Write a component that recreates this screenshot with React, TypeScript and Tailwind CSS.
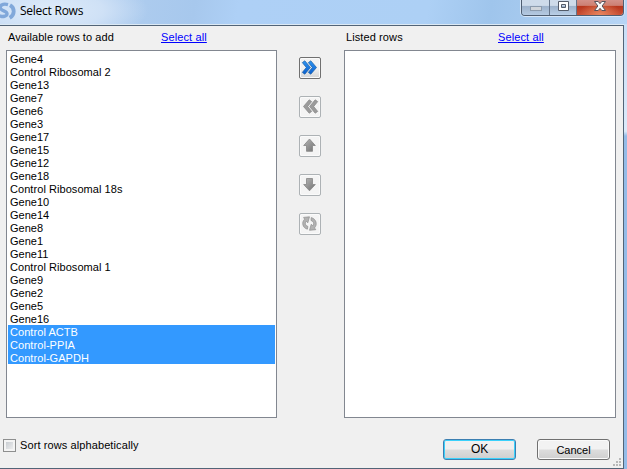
import type { ReactNode } from "react";

const rows = [
  "Gene4", "Control Ribosomal 2", "Gene13", "Gene7", "Gene6", "Gene3", "Gene17", "Gene15",
  "Gene12", "Gene18", "Control Ribosomal 18s", "Gene10", "Gene14", "Gene8", "Gene1", "Gene11",
  "Control Ribosomal 1", "Gene9", "Gene2", "Gene5", "Gene16", "Control ACTB", "Control-PPIA",
  "Control-GAPDH",
];
const selected = new Set(["Control ACTB", "Control-PPIA", "Control-GAPDH"]);

function ToolButton({ label, active, children }: { label: string; active?: boolean; children: ReactNode }) {
  return (
    <button
      aria-label={label}
      className={`flex h-[22px] w-[22px] items-center justify-center rounded-[2px] border shadow-[inset_0_0_0_1px_#fafafa] ${
        active ? "border-[#707070] bg-linear-to-b from-[#f2f2f2] from-50% to-[#d5d5d5]" : "border-[#adb2b5] bg-[#f4f4f4]"
      }`}
    >
      {children}
    </button>
  );
}

function Chevrons({ left }: { left?: boolean }) {
  return (
    <svg width="20" height="20" viewBox="0 0 20 20" className={left ? "-scale-x-100" : ""}>
      <defs>
        <linearGradient id="blue" x2="0" y2="1">
          <stop stopColor="#2f95f2" />
          <stop offset="1" stopColor="#0a5fd0" />
        </linearGradient>
      </defs>
      <g fill={left ? "#9b9b9b" : "url(#blue)"} stroke={left ? "#858585" : "#1f609f"} strokeWidth=".7" strokeLinejoin="round">
        <path d="M2.3 4.6 4.8 2.8l5.7 6.7-5.7 6.7-2.5-1.8 4-4.9Z" />
        <path d="M8.3 4.6l2.5-1.8 5.7 6.7-5.7 6.7-2.5-1.8 4-4.9Z" />
      </g>
    </svg>
  );
}

function Arrow({ down }: { down?: boolean }) {
  return (
    <svg width="20" height="20" viewBox="0 0 20 20">
      <defs>
        <linearGradient id="grey" x2="1" y2="1">
          <stop stopColor="#b8b8b8" />
          <stop offset="1" stopColor="#707070" />
        </linearGradient>
      </defs>
      <path
        d={down ? "M6.5 3.5h6v6h2.8l-5.8 6.3-5.8-6.3h2.8Z" : "m9.5 3 5.8 6.5h-2.8v5.8h-6V9.5H3.7Z"}
        fill="url(#grey)" stroke="#858585" strokeWidth=".8"
      />
    </svg>
  );
}

function Refresh() {
  return (
    <svg width="20" height="20" viewBox="0 0 20 20" fill="#b2b2b2" stroke="#8e8e8e" strokeWidth=".7" strokeLinejoin="round">
      <path d="M7.4 15.2C2.6 14 1.2 8.3 4.6 5.2L3.6 3.4l5.9-.6-1.7 6-1.5-1.5C4.600 9.300 5.200 11.400 7.900 12.400Z" />
      <path d="M11.200 3.600c5 1.200 6.600 7 3.300 10.300l1.300 1.800-6.300.6 1.700-6 1.600 1.400c1.600-2 .9-4.200-1.800-5.200Z" />
    </svg>
  );
}

function TitleBar() {
  return (
    <header className="flex h-6 shrink-0 items-start justify-between bg-[radial-gradient(ellipse_100px_35px_at_48px_10px,#deebfa_0%,#cfe1f6_55%,transparent_100%),linear-gradient(100deg,#bbd4f1_0%,#a7c8ed_31%,#aed0f6_38%,#add0f5_68%,#9fc5ec_78%,#b7d5f5_100%)]">
      <div className="flex h-[22px] items-center">
        <svg width="16" height="20" viewBox="0 0 16 20" fill="none" stroke="#81a8da">
          <path d="M8 3.6C2.7 2.2-1 4.6.5 7.6c1.3 2.5 6.7 2.3 6.5 5.4-.2 2.4-4.1 3.1-7.3 1.7" strokeWidth="3.4" />
          <path d="M10 4.2c5 2.9 5 9.6-.3 12.7" strokeWidth="3.8" />
        </svg>
        <h1 className="ml-1 font-['Open_Sans',sans-serif] text-[12px] leading-[22px] tracking-[-0.25px] text-black">Select Rows</h1>
      </div>
      <div className="mr-[3px] flex h-4 w-[103px] overflow-hidden rounded-b-[4px] border border-t-0 border-[#4f5e71] shadow-[0_0_0_1px_#d7e6f7]">
        <button aria-label="Minimize" className="flex w-7 items-start justify-center border-r border-[#64748a] bg-linear-to-b from-[#cedbea] from-36% via-[#9eb3cc] via-42% to-[#b5cae2] pt-[6px]">
          <span className="h-[5px] w-[12px] border border-[#8c9bad] bg-[#d0d5db]" />
        </button>
        <button aria-label="Maximize" className="flex w-[27px] items-start justify-center border-r border-[#64748a] bg-linear-to-b from-[#cedbea] from-36% via-[#9eb3cc] via-42% to-[#b9cfe7]">
          <svg width="13" height="12" viewBox="0 0 13 12" className="shrink-0">
            <path d="M1.5 1.5h10v9h-10Zm3 3v3h4v-3Z" fill="#fff" fillRule="evenodd" stroke="#535b69" />
          </svg>
        </button>
        <button aria-label="Close" className="flex flex-1 items-start justify-center bg-[radial-gradient(ellipse_at_bottom,#e8865f_0,transparent_65%),linear-gradient(#d49188_0%,#cc8074_36%,#b7361d_42%,#c95035_100%)]">
          <svg width="14" height="12" viewBox="0 0 14 12" className="shrink-0">
            <path d="M1.5 1.5h3.7L7 3.7l1.8-2.2h3.7L9.1 6l3.4 4.5H8.8L7 8.3l-1.8 2.2H1.5L4.9 6Z" fill="#f9f9f9" stroke="#58525a" />
          </svg>
        </button>
      </div>
    </header>
  );
}

function ListHeader({ title, titleClass }: { title: string; titleClass: string }) {
  return (
    <div className="flex h-6 pt-[5px] leading-[13px]">
      <span className={`pl-[2px] whitespace-nowrap ${titleClass}`}>{title}</span>
      <a href="#" className="tracking-[0.12px] text-[#0000ff] underline">Select all</a>
    </div>
  );
}

export default function App() {
  return (
    <div className="flex h-[469px] w-[627px] flex-col overflow-hidden bg-linear-to-b from-[#c3dcf6] from-0% via-[#dceafa] via-28% to-[#94bce8] to-29% font-['Liberation_Sans',Arial,sans-serif] text-[11px] text-black">
      <TitleBar />
      <div className="h-px w-[624px] shrink-0 bg-[#dce9f4]" />
      <main className="flex h-[444px] w-[624px] flex-col border-y border-r border-[#526477] bg-[#f0f0f0]">
        <div className="flex pl-[6px]">
          <section className="w-[271px]">
            <ListHeader title="Available rows to add" titleClass="w-[155px] tracking-[0.07px]" />
            <ul className="h-[368px] border border-[#828790] bg-white p-px">
              {rows.map((row) => (
                <li
                  key={row}
                  className={`h-[13px] pl-[2px] leading-[14px] whitespace-nowrap ${selected.has(row) ? "bg-[#3399ff] text-white" : ""} ${row.startsWith("Control") ? "tracking-[0.06px]" : ""}`}
                >
                  {row}
                </li>
              ))}
            </ul>
          </section>
          <nav className="flex w-[67px] flex-col items-start gap-[17px] pt-[31px] pl-[22px]">
            <ToolButton label="Add selected" active><Chevrons /></ToolButton>
            <ToolButton label="Remove selected"><Chevrons left /></ToolButton>
            <ToolButton label="Move up"><Arrow /></ToolButton>
            <ToolButton label="Move down"><Arrow down /></ToolButton>
            <ToolButton label="Reset"><Refresh /></ToolButton>
          </nav>
          <section className="w-[272px]">
            <ListHeader title="Listed rows" titleClass="w-[154px] tracking-[0.1px]" />
            <ul className="h-[368px] border border-[#828790] bg-white" />
          </section>
        </div>
        <footer className="flex h-[50px] items-start pt-[21px] pl-[3px]">
          <label className="flex w-[440px] gap-1 leading-[13px]">
            <span className="h-[13px] w-[13px] border border-[#8e8f8f] bg-linear-to-br from-[#bfc4ca] to-[#f6f6f6] shadow-[inset_0_0_0_2px_#f4f4f4]" />
            <span className="tracking-[0.1px]">Sort rows alphabetically</span>
          </label>
          <button className="h-[21px] w-[73px] rounded-[3px] border border-[#3c7fb1] bg-linear-to-b from-[#f0f0f0] from-48% via-[#dddddd] via-52% to-[#cfcfcf] text-[12px] leading-[19px] tracking-[-0.2px] shadow-[inset_0_0_0_1px_#3bd1fb]">OK</button>
          <button className="ml-[21px] h-[21px] w-[73px] rounded-[3px] border border-[#707070] bg-linear-to-b from-[#f2f2f2] from-48% via-[#dddddd] via-52% to-[#cfcfcf] text-[11px] leading-[18px] shadow-[inset_0_0_0_1px_#fafafa]">Cancel</button>
          <svg width="9" height="9" viewBox="0 0 9 9" fill="#b8b8b8" className="mt-[19px] ml-[3px]">
            <path d="M6 0h2v2H6zM3 3h2v2H3zM6 3h2v2H6zM0 6h2v2H0zM3 6h2v2H3zM6 6h2v2H6z" />
          </svg>
        </footer>
      </main>
    </div>
  );
}
